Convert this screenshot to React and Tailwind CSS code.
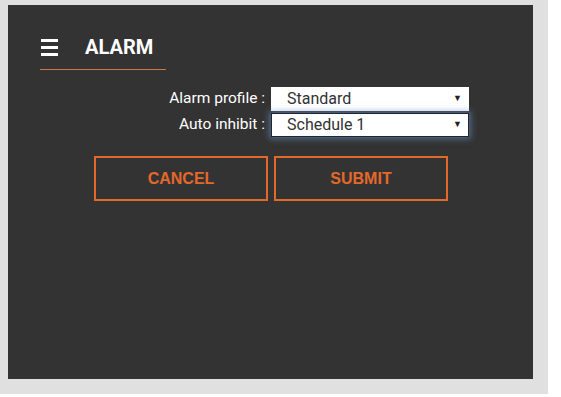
const font = { fontFamily: "Roboto, 'Liberation Sans', sans-serif" }

function Field({ label, value, focused }) {
  return (
    <div className="flex items-center gap-[6px]">
      <span className="w-[160px] text-right text-[15.5px] leading-none text-white">{label}</span>
      <div
        className={
          "relative flex h-[24px] w-[198px] items-center bg-white pl-[15px] text-[16px] text-[#333] " +
          (focused ? "border border-[#1d2836] shadow-[0_0_6px_2px_rgba(110,150,200,0.55)]" : "border border-white")
        }
      >
        {value}
        <span className="absolute right-[6px] top-[4px] text-[9px] text-[#222]">▼</span>
      </div>
    </div>
  )
}

export default function App() {
  return (
    <div className="h-[394px] w-[548px] bg-[#e0e0e0] pl-[8px] pt-[5px]" style={font}>
      <div className="h-[374px] w-[525px] bg-[#333333]">
        <div className="flex items-center pl-[33px] pt-[32px]">
          <div className="flex w-[17px] flex-col gap-[4px]">
            <span className="h-[3px] bg-white" />
            <span className="h-[3px] bg-white" />
            <span className="h-[3px] bg-white" />
          </div>
          <h1 className="ml-[27px] text-[20px] font-bold leading-none text-white">ALARM</h1>
        </div>
        <div className="ml-[32px] mt-[12px] h-px w-[126px] bg-[#c57a48]" />

        <div className="ml-[97px] mt-[17px] flex flex-col gap-[2px]">
          <Field label="Alarm profile :" value="Standard" />
          <Field label="Auto inhibit :" value="Schedule 1" focused />
        </div>

        <div className="ml-[86px] mt-[19px] flex gap-[6px]" style={{ fontFamily: "'Liberation Sans', Arial, sans-serif" }}>
          <button className="h-[45px] w-[174px] border-2 border-[#e2692a] text-[16px] font-bold text-[#e2692a]">CANCEL</button>
          <button className="h-[45px] w-[174px] border-2 border-[#e2692a] text-[16px] font-bold text-[#e2692a]">SUBMIT</button>
        </div>
      </div>
    </div>
  )
}
